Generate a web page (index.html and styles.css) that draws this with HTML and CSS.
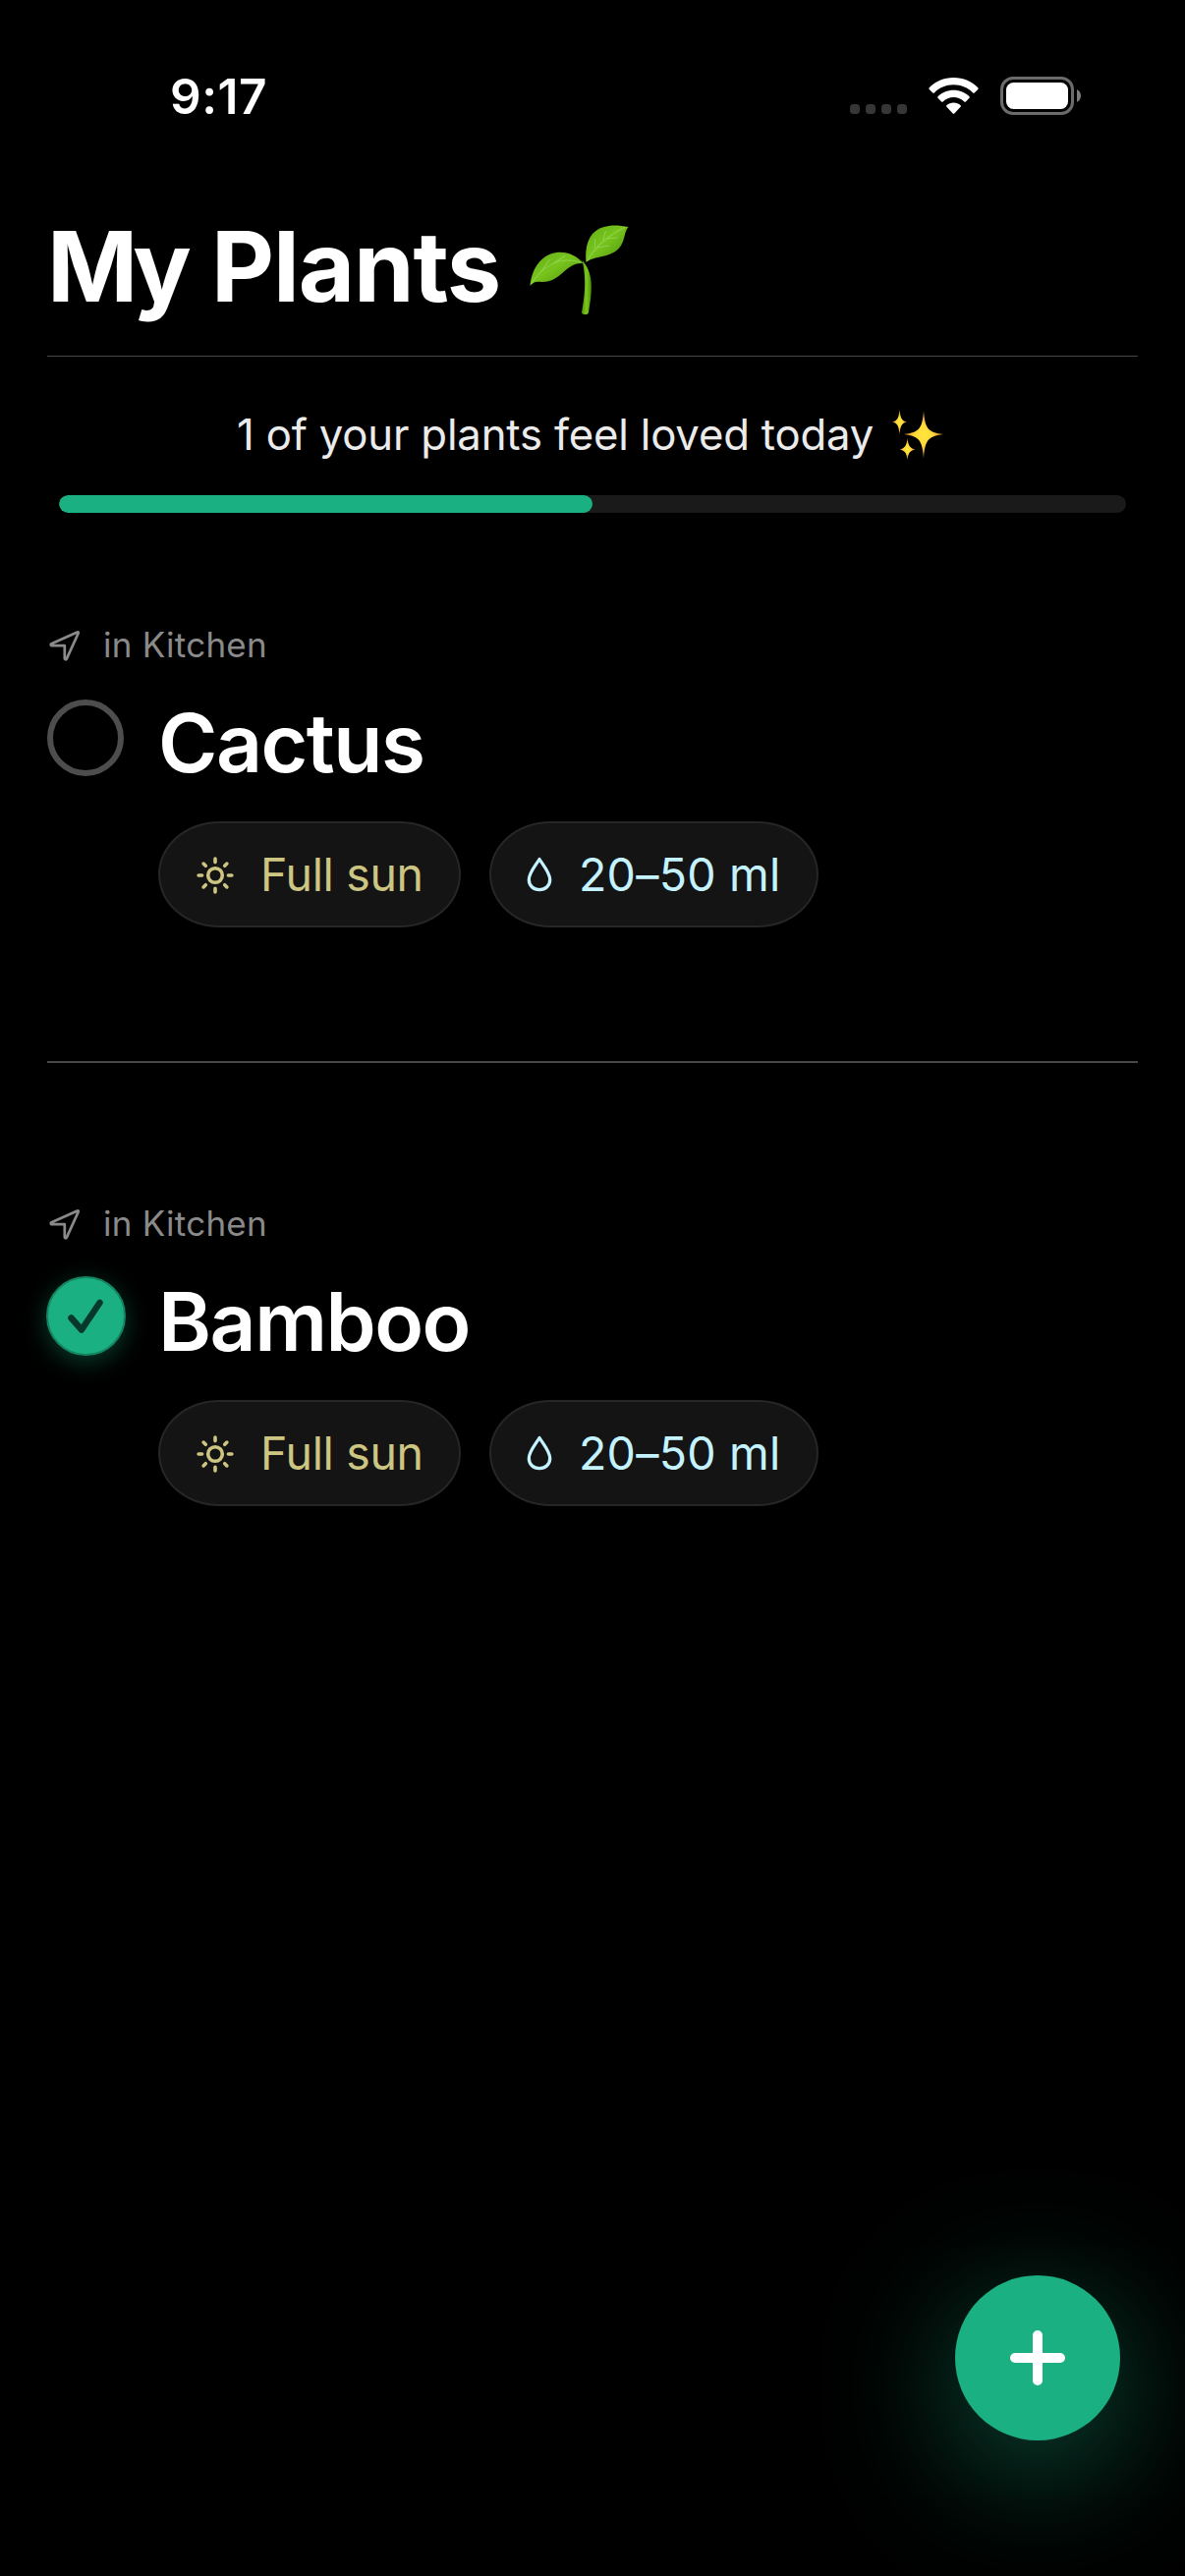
FILE: index.html
```html
<!DOCTYPE html>
<html lang="en">
<head>
<meta charset="utf-8">
<title>My Plants</title>
<link rel="stylesheet" href="styles.css">
</head>
<body>
<svg class="defs" width="0" height="0" aria-hidden="true">
  <symbol id="nav" viewBox="0 0 34 34"><path d="M3.4 15.2 29.6 3.4c.9-.4 1.500.2 1.100 1.100L18.800 30.600c-.5 1.100-2 .8-2-.4V17.200H3.900c-1.300 0-1.600-1.500-.5-2Z" fill="none" stroke="currentColor" stroke-width="2.700" stroke-linejoin="round"/></symbol>
  <symbol id="sun" viewBox="0 0 38 38"><g fill="none" stroke="currentColor" stroke-width="3.600" stroke-linecap="round"><circle cx="19" cy="19" r="7.300"/><path d="M19 2.100v3.500M19 32.400v3.500M2.100 19h3.500M32.400 19h3.500M7.100 7.100l2.200 2.200M28.700 28.700l2.200 2.200M7.100 30.900l2.200-2.200M28.700 9.300l2.200-2.200"/></g></symbol>
  <symbol id="drop" viewBox="0 0 26 36"><path d="M13 2.500C9 9 2.300 16.500 2.300 23.300 2.300 29.500 6.700 33.600 13 33.600s10.700-4.100 10.700-10.300C23.700 16.500 17 9 13 2.500Z" fill="none" stroke="currentColor" stroke-width="3.300" stroke-linejoin="round"/></symbol>
</svg>
<header class="status">
  <time class="time">9:17</time>
  <div class="indicators">
    <div class="cell"><i></i><i></i><i></i><i></i></div>
    <svg class="wifi" viewBox="0 0 51 38"><g fill="#fff"><path d="M25.500 0C35.500 0 44.300 4 50.300 10.300c.5.500.5 1.100 0 1.600l-3.600 3.500c-.5.500-1.100.5-1.600 0C40.200 10.400 33.200 7.300 25.500 7.300S10.800 10.400 5.900 15.400c-.5.500-1.100.5-1.600 0L.7 11.900c-.5-.5-.5-1.100 0-1.600C6.700 4 15.500 0 25.500 0Z"/><path d="M25.500 12.800c6.300 0 11.900 2.500 16 6.400.5.500.5 1.100 0 1.600l-3.600 3.600c-.5.500-1.100.5-1.600.1-2.800-2.700-6.600-4.400-10.800-4.400s-8 1.700-10.800 4.400c-.5.400-1.100.4-1.600-.1l-3.600-3.600c-.5-.5-.5-1.100 0-1.600 4.100-3.900 9.700-6.400 16-6.400Z"/><path d="M25.500 25.600c2.700 0 5.200 1 7.100 2.700.5.500.5 1 0 1.500l-6.300 6.800c-.5.500-1.100.5-1.600 0l-6.300-6.800c-.5-.5-.5-1 0-1.500 1.900-1.700 4.400-2.700 7.100-2.700Z"/></g></svg>
    <svg class="battery" viewBox="0 0 82 39"><rect x="1.500" y="1.500" width="72" height="36" rx="11.500" fill="none" stroke="#6b6b6b" stroke-width="3"/><rect x="6" y="6" width="63" height="27" rx="7.500" fill="#fff"/><path d="M78 13c2.500 1.300 4 3.500 4 6.500s-1.500 5.200-4 6.500Z" fill="#7b7b7b"/></svg>
  </div>
</header>
<main class="page">
  <div class="heading">
    <h1><span class="tight">My</span> Plants</h1>
    <svg class="seedling" viewBox="0 0 100 92">
      <defs><linearGradient id="leaf" x1="0" y1="0" x2="1" y2="1"><stop offset="0" stop-color="#5fae16"/><stop offset=".45" stop-color="#78c41c"/><stop offset="1" stop-color="#478f0c"/></linearGradient><linearGradient id="stem"><stop offset="0" stop-color="#4f9609"/><stop offset=".5" stop-color="#7bc81c"/><stop offset="1" stop-color="#4b9107"/></linearGradient></defs>
      <path d="M54 37c4 5 7 11 8 20 1 12-1 22-2.500 32-.5 3-6.500 3-7 0C55 76 58 56 53 36Z" fill="url(#stem)"/>
      <path d="M0 62C2 43 12 30 27 28c12-1 21 4 27 11-19-1-21 19-42 19-6-1-9 0-12 4Z" fill="url(#leaf)"/>
      <path d="M57 38C55 16 63 3 80 1c7-1 13 0 20 1-5 6-3 14-9 21-9 11-26 8-34 15Z" fill="url(#leaf)"/>
      <path d="M1 60C12 44 27 31 52 38M11 48l9-13M24 39l12-8M58 37C65 24 76 12 97 2M66 24l0-10M74 16l3-10M68 23l13-2M77 14l12-1" fill="none" stroke="#a0dc6c" stroke-width="1.100" opacity=".6"/>
    </svg>
  </div>
  <section class="progress">
    <p class="summary"><span>1 of your plants feel loved today</span>
      <svg class="sparkles" viewBox="0 0 52 51"><defs><radialGradient id="gold"><stop offset="0" stop-color="#ffe63b"/><stop offset=".45" stop-color="#ffd83a"/><stop offset="1" stop-color="#c9772c"/></radialGradient></defs><g fill="url(#gold)"><path d="M32 1C33.500 19 36 23 52 25 36 27.500 33.500 31 32 50 30.500 31 28 27.500 12 25 28 23 30.500 19 32 1Z"/><path d="M7.500 0C8.500 9 9.500 11 15 12.500 9.500 14 8.500 16 7.500 25 6.500 16 5.500 14 0 12.500 5.500 11 6.500 9 7.500 0Z"/><path d="M15.500 29C16.500 37 18 39 23.500 40.500 18 42 16.500 43.500 15.500 51 14.500 43.500 13 42 7.500 40.500 13 39 14.500 37 15.500 29Z"/></g></svg></p>
    <div class="bar"><div class="fill" style="width:50%"></div></div>
  </section>
  <article class="plant">
    <div class="place"><svg class="nav"><use href="#nav"/></svg><span>in Kitchen</span></div>
    <div class="row"><div class="toggle"></div><h2>Cactus</h2></div>
    <div class="chips">
      <div class="chip light"><svg class="sun"><use href="#sun"/></svg><span>Full sun</span></div>
      <div class="chip water"><svg class="drop"><use href="#drop"/></svg><span>20–50 ml</span></div>
    </div>
  </article>
  <article class="plant">
    <div class="place"><svg class="nav"><use href="#nav"/></svg><span>in Kitchen</span></div>
    <div class="row"><div class="toggle done"><svg viewBox="0 0 81 81"><path d="M25.500 42.500 36 54.500 54.500 27" fill="none" stroke="#06392a" stroke-width="6.500" stroke-linecap="round" stroke-linejoin="round"/></svg></div><h2>Bamboo</h2></div>
    <div class="chips">
      <div class="chip light"><svg class="sun"><use href="#sun"/></svg><span>Full sun</span></div>
      <div class="chip water"><svg class="drop"><use href="#drop"/></svg><span>20–50 ml</span></div>
    </div>
  </article>
</main>
<button class="fab" aria-label="Add plant"><svg viewBox="0 0 56 56"><path d="M28 5v46M5 28h46" stroke="#fff" stroke-width="10" stroke-linecap="round"/></svg></button>
</body>
</html>
```
FILE: styles.css
```css
* { box-sizing: border-box; }
body {
  margin: 0;
  width: 1206px;
  height: 2622px;
  overflow: hidden;
  background: #000;
  color: #fff;
  font-family: Inter, "Liberation Sans", sans-serif;
}
svg { display: block; flex: none; }
.defs { position: absolute; }
h1, h2, p { margin: 0; white-space: nowrap; }

.status {
  height: 200px;
  padding: 68px 106px 0 173px;
  display: flex;
  justify-content: space-between;
  align-items: flex-start;
}
.time { font-size: 49.5px; line-height: 60px; font-weight: 600; letter-spacing: 0.5px; }
.indicators { display: flex; padding-top: 10px; }
.cell { display: flex; gap: 6px; padding-top: 28px; margin-right: 22px; }
.cell i { width: 10px; height: 10px; border-radius: 3.5px; background: #363636; }
.wifi { width: 51px; height: 38px; margin: 1px 22px 0 0; }
.battery { width: 82px; height: 39px; }

.page { padding: 0 48px; }
.heading {
  height: 163px;
  display: flex;
  align-items: flex-start;
  border-bottom: 1px solid #484848;
}
h1 { width: 491px; padding-top: 11px; font-size: 99px; line-height: 120px; font-weight: 700; letter-spacing: -1.2px; word-spacing: 4px; }
.tight { letter-spacing: -6px; }
.seedling { width: 101px; height: 92px; margin-top: 29px; }

.progress { height: 263px; padding: 47px 12px 0; }
.summary {
  display: flex;
  align-items: flex-start;
  padding-left: 181px;
  height: 94px;
  font-size: 43.7px;
  line-height: 64px;
  letter-spacing: -0.18px;
  color: #ebebeb;
}
.summary span { width: 667px; padding-top: 1px; }
.sparkles { width: 52px; height: 51px; margin-top: 7px; }
.bar { height: 18px; border-radius: 9px; background: #1a1a1a; overflow: hidden; }
.fill { height: 100%; border-radius: 9px; background: #1ab082; }

.plant { height: 454px; }
.plant + .plant { border-top: 2px solid #484848; padding-top: 133px; height: 600px; }
.place { display: flex; align-items: center; height: 60px; margin-bottom: 26px; font-size: 35px; color: #8a8a8a; letter-spacing: .25px; }
.nav { width: 34px; height: 34px; margin: 1px 22px 0 1px; }
.row { display: flex; height: 124px; }
.toggle { width: 78px; height: 78px; flex: none; border: 6px solid #4d4d4d; border-radius: 50%; margin-right: 35px; }
.toggle.done { width: 81px; height: 81px; margin: -2px 33px 0 -1px; border: 2px solid #14855f; background: #1ab082; box-shadow: 0 6px 24px rgba(26, 176, 130, .35); }
.toggle svg { width: 81px; height: 81px; margin: -2px; }
h2 { font-size: 82px; line-height: 90px; font-weight: 600; letter-spacing: -1.5px; }
.chips { display: flex; gap: 29px; padding-left: 113px; }
.chip {
  height: 108px;
  display: flex;
  align-items: center;
  border: 2px solid #262626;
  border-radius: 62px / 54px;
  background: #141414;
  font-size: 46.5px;
  white-space: nowrap;
}
.light { width: 308px; padding-left: 37px; color: #cdc582; letter-spacing: -0.35px; }
.water { width: 335px; padding-left: 36px; color: #c5f2ff; letter-spacing: 0.25px; }
.sun { width: 38px; height: 38px; margin: 1px 27px 0 0; }
.drop { width: 26px; height: 36px; margin-right: 27px; }

.fab {
  position: absolute;
  left: 972px;
  top: 2316px;
  width: 168px;
  height: 168px;
  padding: 56px;
  border: 0;
  border-radius: 50%;
  background: #1ab082;
  box-shadow: 0 30px 136px rgba(26, 176, 130, .5);
}
.fab svg { width: 56px; height: 56px; }
```
